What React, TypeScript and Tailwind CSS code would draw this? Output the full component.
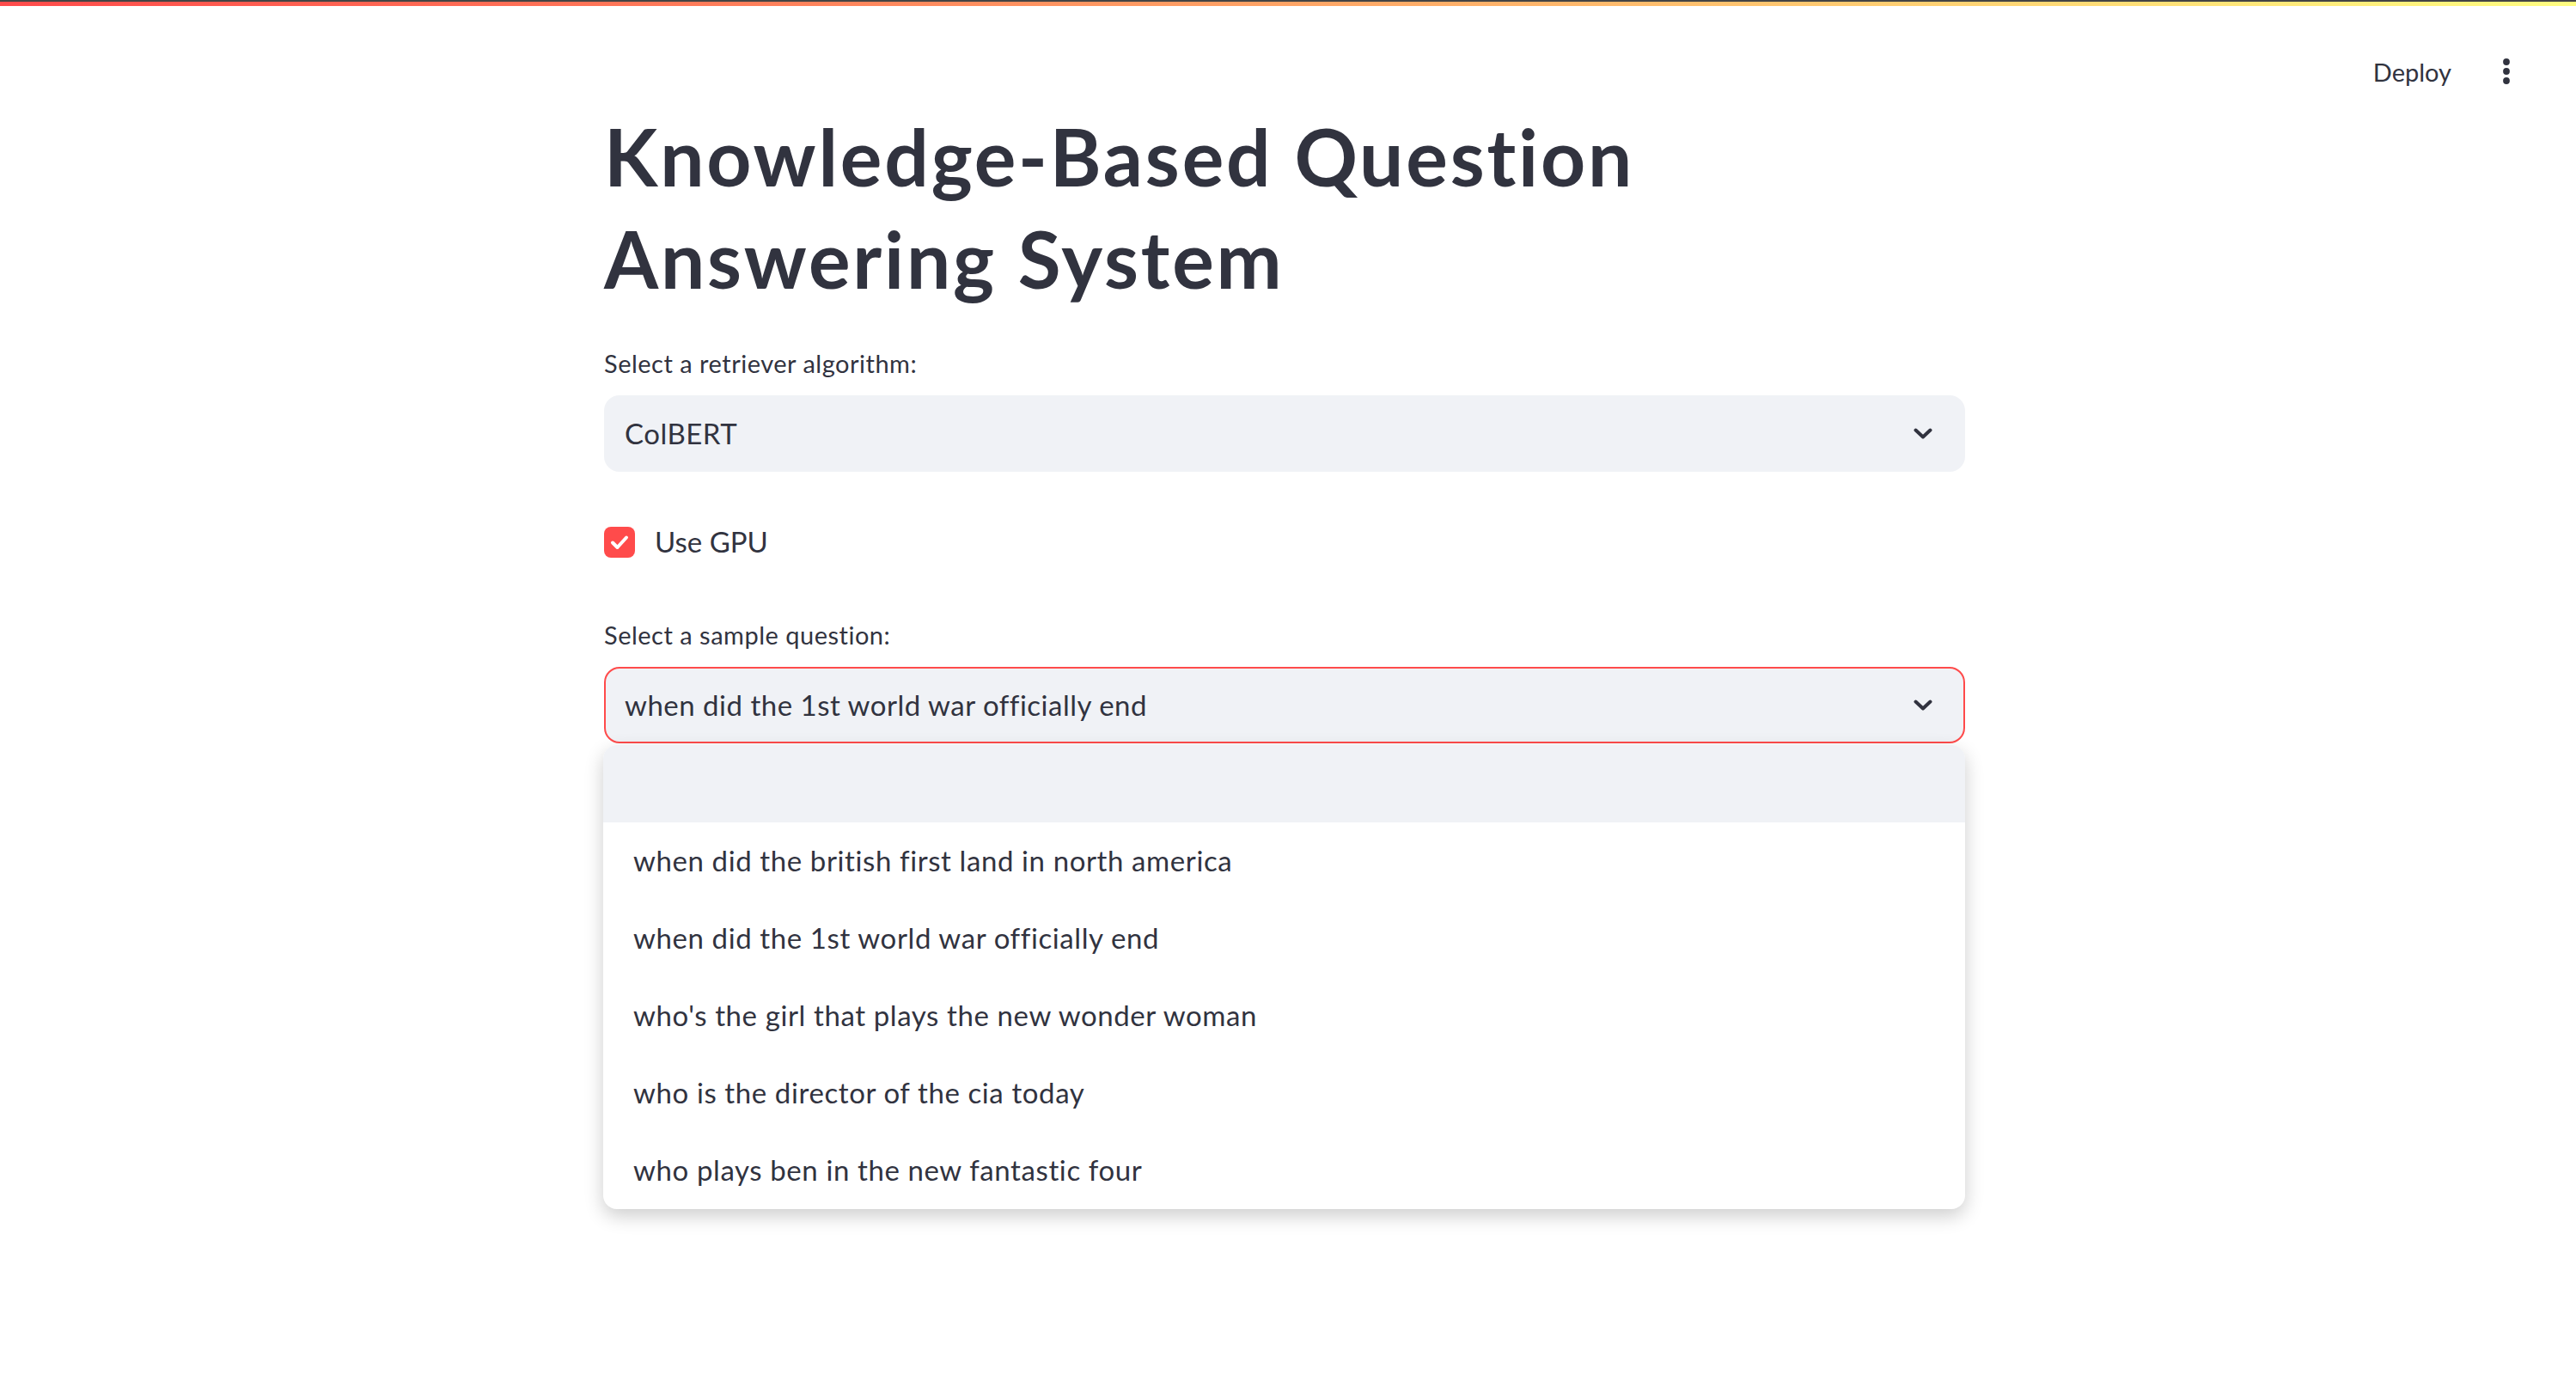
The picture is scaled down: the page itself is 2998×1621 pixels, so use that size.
const OPCIONES = [
  "",
  "when did the british first land in north america",
  "when did the 1st world war officially end",
  "who's the girl that plays the new wonder woman",
  "who is the director of the cia today",
  "who plays ben in the new fantastic four",
];

export default function App() {
  return (
    <div className="relative min-h-screen bg-white text-[#31333f] font-['Lato','Liberation_Sans',sans-serif]">
      <div className="h-[2px] bg-[#444]" />
      <div className="h-[5px] bg-[linear-gradient(90deg,#ff4b4b,#fffd80)]" />

      <header className="absolute top-[7px] right-0 h-[152px] flex items-center pr-[53px]">
        <span className="text-[29px] leading-none mr-[36px]">Deploy</span>
        <button className="w-[56px] h-[56px] flex items-center justify-center">
          <svg width="10" height="34" viewBox="0 0 10 34" fill="#31333f">
            <circle cx="5" cy="6" r="3.9" />
            <circle cx="5" cy="17" r="3.9" />
            <circle cx="5" cy="28" r="3.9" />
          </svg>
        </button>
      </header>

      <main className="w-[1592px] mx-auto pr-[8px] pt-[115px] pb-[200px]">
        <h1 className="font-bold text-[91px] leading-[119px] tracking-[2.8px]">
          Knowledge-Based Question
          <br />
          Answering System
        </h1>

        <Etiqueta className="mt-[43px]">Select a retriever algorithm:</Etiqueta>
        <Selector valor="ColBERT" />

        <label className="mt-[64px] flex items-center h-[36px] gap-[23px]">
          <span className="w-[36px] h-[36px] rounded-[8px] bg-[#ff4b4b] flex items-center justify-center">
            <svg width="22" height="18" viewBox="0 0 22 18" fill="none">
              <path d="M3 9.5 L8.5 15 L19 3.5" stroke="white" strokeWidth="4" strokeLinecap="round" strokeLinejoin="round" />
            </svg>
          </span>
          <span className="text-[33px]">Use GPU</span>
        </label>

        <Etiqueta className="mt-[70px]">Select a sample question:</Etiqueta>
        <div className="relative">
          <Selector valor="when did the 1st world war officially end" activo />
          <ul className="absolute left-[-1px] right-0 top-full mt-[2px] z-10 bg-white rounded-[16px] overflow-hidden shadow-[0_8px_22px_rgba(0,0,0,0.2)]">
            {OPCIONES.map((o, i) => (
              <li
                key={i}
                className={`h-[90px] flex items-center pl-[35px] text-[33px] tracking-[0.6px] ${i === 0 ? "bg-[#f0f2f6]" : ""}`}
              >
                {o}
              </li>
            ))}
          </ul>
        </div>
      </main>
    </div>
  );
}

function Etiqueta({ children, className }: { children: React.ReactNode; className?: string }) {
  return <p className={`text-[29px] leading-[40px] tracking-[0.5px] mb-[17px] ${className ?? ""}`}>{children}</p>;
}

function Selector({ valor, activo }: { valor: string; activo?: boolean }) {
  return (
    <div
      className={`h-[89px] rounded-[18px] bg-[#f0f2f6] flex items-center justify-between pl-[22px] pr-[36px] border-2 ${
        activo ? "border-[#ff4b4b]" : "border-[#f0f2f6]"
      }`}
    >
      <span className="text-[33px] tracking-[0.5px]">{valor}</span>
      <svg width="22" height="13" viewBox="0 0 22 13" fill="none">
        <path d="M2.5 2.5 L11 10.5 L19.5 2.5" stroke="#31333f" strokeWidth="4" strokeLinecap="round" strokeLinejoin="round" />
      </svg>
    </div>
  );
}
